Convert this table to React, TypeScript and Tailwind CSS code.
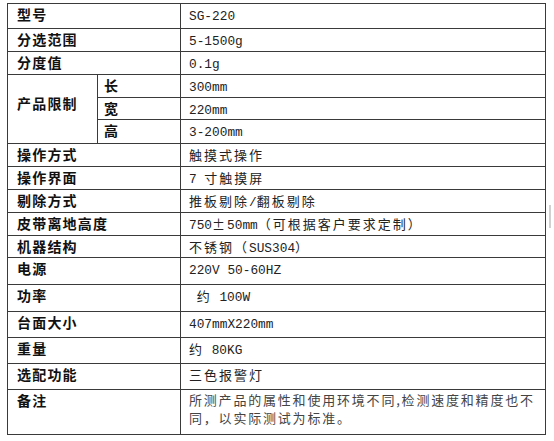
import React from "react";

const cjk = "font-['Noto_Sans_CJK_SC','Noto_Sans_CJK_JP',sans-serif]";

function Mixed({ text }: { text: string }) {
  const parts = text.split(/([\x20-\x7E]+)/).filter((p) => p.length > 0);
  return (
    <>
      {parts.map((p, i) =>
        /^[\x20-\x7E]+$/.test(p) ? (
          <span key={i} className="font-['Liberation_Mono',monospace] text-[12.8px] tracking-normal whitespace-pre">
            {p}
          </span>
        ) : (
          <span key={i} className="font-['Noto_Sans_CJK_SC',sans-serif] text-[13px] tracking-[2px]">
            {p}
          </span>
        )
      )}
    </>
  );
}

const label =
  "min-w-0 border-r border-b border-[#3a3a3a] text-[14px] leading-[20px] font-bold tracking-[1.2px] text-[#111] whitespace-nowrap font-['Noto_Sans_CJK_SC',sans-serif]";
const value =
  "min-w-0 col-start-3 border-r border-b border-[#3a3a3a] pl-[8px] leading-[20px] text-[#222] whitespace-nowrap overflow-hidden";

const simple: [string, string][] = [
  ["操作方式", "触摸式操作"],
  ["操作界面", "7 寸触摸屏"],
  ["剔除方式", "推板剔除/翻板剔除"],
  ["皮带离地高度", "750±50mm（可根据客户要求定制）"],
  ["机器结构", "不锈钢（SUS304）"],
  ["电源", "220V 50-60HZ"],
  ["功率", " 约 100W"],
  ["台面大小", "407mmX220mm"],
  ["重量", "约 80KG"],
  ["选配功能", "三色报警灯"],
];

export default function App() {
  return (
    <div className="relative w-[554px] h-[441px] bg-white overflow-hidden">
      <div className="ml-[7px] pt-[3px]">
        <div className="grid w-[539px] grid-cols-[90px_83px_365px] grid-rows-[25px_23px_23px_23px_22px_24px_23px_23px_23px_23px_22px_27px_27px_26px_26px_26px_45px] border-l border-t border-[#3a3a3a]">
          <div className={`col-start-1 col-span-2 pl-[9px] ${label}`}>型号</div>
          <div className={value}>
            <Mixed text="SG-220" />
          </div>
          <div className={`col-start-1 col-span-2 pl-[9px] ${label}`}>分选范围</div>
          <div className={value}>
            <Mixed text="5-1500g" />
          </div>
          <div className={`col-start-1 col-span-2 pl-[9px] ${label}`}>分度值</div>
          <div className={value}>
            <Mixed text="0.1g" />
          </div>

          <div className={`col-start-1 row-start-4 row-span-3 pl-[9px] pt-[18px] ${label}`}>产品限制</div>
          <div className={`col-start-2 row-start-4 pl-[6px] ${label}`}>长</div>
          <div className={`row-start-4 ${value}`}>
            <Mixed text="300mm" />
          </div>
          <div className={`col-start-2 row-start-5 pl-[6px] ${label}`}>宽</div>
          <div className={`row-start-5 ${value}`}>
            <Mixed text="220mm" />
          </div>
          <div className={`col-start-2 row-start-6 pl-[6px] ${label}`}>高</div>
          <div className={`row-start-6 ${value}`}>
            <Mixed text="3-200mm" />
          </div>

          {simple.map(([k, v]) => (
            <React.Fragment key={k}>
              <div className={`col-start-1 col-span-2 pl-[9px] ${label}`}>{k}</div>
              <div className={value}>
                <Mixed text={v} />
              </div>
            </React.Fragment>
          ))}

          <div className={`col-start-1 col-span-2 pl-[9px] ${label}`}>备注</div>
          <div
            className={`min-w-0 col-start-3 border-r border-b border-[#3a3a3a] pl-[8px] pt-[1px] leading-[18px] text-[#444] text-[13px] tracking-[1.8px] ${cjk}`}
          >
            <div className="whitespace-nowrap">所测产品的属性和使用环境不同,检测速度和精度也不</div>
            <div className="whitespace-nowrap">同，以实际测试为标准。</div>
          </div>
        </div>
      </div>

      <div className="absolute left-[549px] top-[205px] w-[2px] h-[23px] bg-[#d0d0d0]" />
    </div>
  );
}
